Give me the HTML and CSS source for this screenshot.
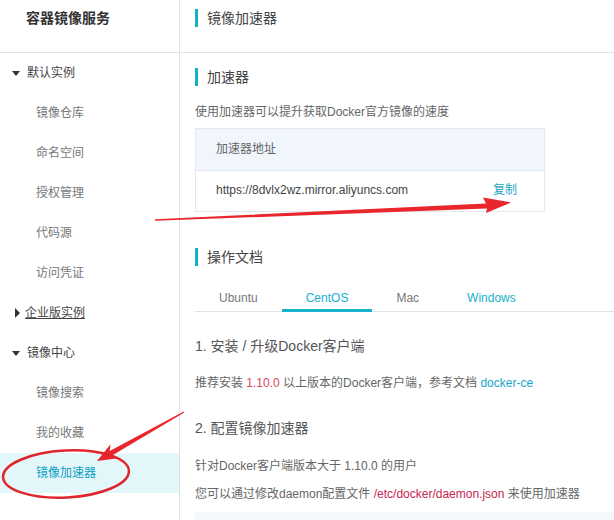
FILE: index.html
```html
<!DOCTYPE html>
<html lang="zh-CN">
<head>
    <meta charset="UTF-8">
    <title>镜像加速器</title>
    <link rel="stylesheet" href="styles.css">
</head>
<body>
    <div class="page">
        <aside class="sidebar">
            <div class="side-title">容器镜像服务</div>
            <ul class="nav">
                <li class="nav-group"><span class="caret down"></span>默认实例</li>
                <li class="nav-item">镜像仓库</li>
                <li class="nav-item">命名空间</li>
                <li class="nav-item">授权管理</li>
                <li class="nav-item">代码源</li>
                <li class="nav-item">访问凭证</li>
                <li class="nav-group hover"><span class="caret right"></span><span class="label">企业版实例</span></li>
                <li class="nav-group"><span class="caret down"></span>镜像中心</li>
                <li class="nav-item">镜像搜索</li>
                <li class="nav-item">我的收藏</li>
                <li class="nav-item active">镜像加速器</li>
            </ul>
        </aside>

        <main class="content">
            <div class="page-head">
                <h1 class="bar-title">镜像加速器</h1>
            </div>

            <div class="body">
                <h2 class="bar-title sec-accel">加速器</h2>
                <p class="desc">使用加速器可以提升获取Docker官方镜像的速度</p>

                <div class="mirror-box">
                    <div class="mirror-head">加速器地址</div>
                    <div class="mirror-row">
                        <span>https://8dvlx2wz.mirror.aliyuncs.com</span>
                        <a href="#" class="link">复制</a>
                    </div>
                </div>

                <h2 class="bar-title sec-docs">操作文档</h2>
                <ul class="tabs">
                    <li>Ubuntu</li>
                    <li class="active">CentOS</li>
                    <li>Mac</li>
                    <li class="hot">Windows</li>
                </ul>

                <h3 class="step step-1">1. 安装 / 升级Docker客户端</h3>
                <p class="text t-1">推荐安装 <span class="ver">1.10.0</span> 以上版本的Docker客户端，参考文档 <a href="#" class="link">docker-ce</a></p>

                <h3 class="step step-2">2. 配置镜像加速器</h3>
                <p class="text t-2">针对Docker客户端版本大于 1.10.0 的用户</p>
                <p class="text t-3">您可以通过修改daemon配置文件 <code class="path">/etc/docker/daemon.json</code> 来使用加速器</p>
                <pre class="code"></pre>
            </div>
        </main>

        <!-- red annotations drawn over the screenshot -->
        <svg class="marks" width="614" height="520" viewBox="0 0 614 520">
            <polygon fill="#e8262c" points="155,219.3 486,203.6 483,197.5 511,202.5 486,213 487,208.6 155,220.8"/>
            <polygon fill="#e8262c" points="183.7,411.4 109.7,451 110.5,444.2 97,461 118.3,458.2 112.1,455.4 184.3,412.6"/>
            <ellipse cx="66" cy="474" rx="63" ry="23.5" fill="none" stroke="#e0262b" stroke-width="2.5" transform="rotate(-3 66 474)"/>
        </svg>
    </div>
</body>
</html>
```

FILE: styles.css
```css
* {
    margin: 0;
    padding: 0;
    box-sizing: border-box;
}

body {
    font-family: "Liberation Sans", "Noto Sans CJK SC", sans-serif;
    font-size: 12px;
    color: #333;
    background: #fff;
    overflow: hidden;
}

.page {
    position: relative;
    display: flex;
    width: 614px;
    height: 520px;
    overflow: hidden;
}

/* sidebar */
.sidebar {
    width: 180px;
    flex-shrink: 0;
    border-right: 1px solid #e2e2e2;
}

.side-title {
    height: 53px;
    padding: 10px 0 0 26px;
    line-height: 16px;
    font-size: 14px;
    font-weight: bold;
    color: #333;
    border-bottom: 1px solid #e2e2e2;
}

.nav {
    list-style: none;
}

.nav li {
    height: 40px;
    line-height: 41px;
}

.nav-group {
    display: flex;
    align-items: center;
    padding-left: 12px;
    color: #444;
}

.nav-group.hover .label {
    text-decoration: underline;
}

.caret {
    width: 0;
    height: 0;
    margin-right: 7px;
}

.caret.down {
    border-left: 4px solid transparent;
    border-right: 4px solid transparent;
    border-top: 5px solid #333;
}

.caret.right {
    margin-left: 3px;
    margin-right: 5px;
    border-top: 5px solid transparent;
    border-bottom: 5px solid transparent;
    border-left: 5px solid #333;
}

.nav-item {
    padding-left: 36px;
    color: #777;
}

.nav-item.active {
    background: #e3f6fa;
    color: #0ba1c4;
}

/* main */
.content {
    flex: 1;
    min-width: 0;
}

.page-head {
    height: 53px;
    padding: 9px 0 0 15px;
    border-bottom: 1px solid #e2e2e2;
}

.bar-title {
    border-left: 3px solid #10b4c3;
    padding-left: 9px;
    height: 18px;
    line-height: 18px;
    font-size: 14px;
    font-weight: normal;
    color: #444;
}

.body {
    padding-left: 15px;
}

.sec-accel {
    margin-top: 15px;
}

.desc {
    margin-top: 17px;
    line-height: 18px;
    color: #666;
}

.mirror-box {
    margin-top: 7px;
    width: 350px;
    border: 1px solid #e4e9ef;
}

.mirror-head {
    height: 42px;
    line-height: 41px;
    padding-left: 20px;
    background: #f0f6fc;
    border-bottom: 1px solid #e4e9ef;
    color: #666;
}

.mirror-row {
    display: flex;
    justify-content: space-between;
    height: 40px;
    line-height: 39px;
    padding: 0 27px 0 20px;
    color: #444;
}

.link {
    color: #1aa5c6;
    text-decoration: none;
}

.sec-docs {
    margin-top: 36px;
}

.tabs {
    display: flex;
    list-style: none;
    margin-top: 21px;
    border-bottom: 1px solid #e2e2e2;
}

.tabs li {
    padding: 0 24px;
    line-height: 22px;
    border-bottom: 3px solid transparent;
    margin-bottom: -1px;
    color: #777;
}

.tabs li.active {
    color: #19b1cc;
    border-bottom-color: #14b5c8;
}

.tabs li.hot {
    color: #19b1cc;
}

.step {
    font-size: 14px;
    font-weight: normal;
    line-height: 20px;
    color: #555;
}

.step-1 {
    margin-top: 24px;
}

.step-2 {
    margin-top: 26px;
}

.text {
    line-height: 18px;
    color: #666;
}

.t-1 {
    margin-top: 18px;
}

.t-2 {
    margin-top: 19px;
}

.t-3 {
    margin-top: 10px;
}

.ver {
    color: #e0435a;
}

.path {
    font-family: inherit;
    color: #c7254e;
}

.code {
    margin-top: 9px;
    height: 60px;
    background: #f3f8fd;
}

.marks {
    position: absolute;
    left: 0;
    top: 0;
    pointer-events: none;
}
```
